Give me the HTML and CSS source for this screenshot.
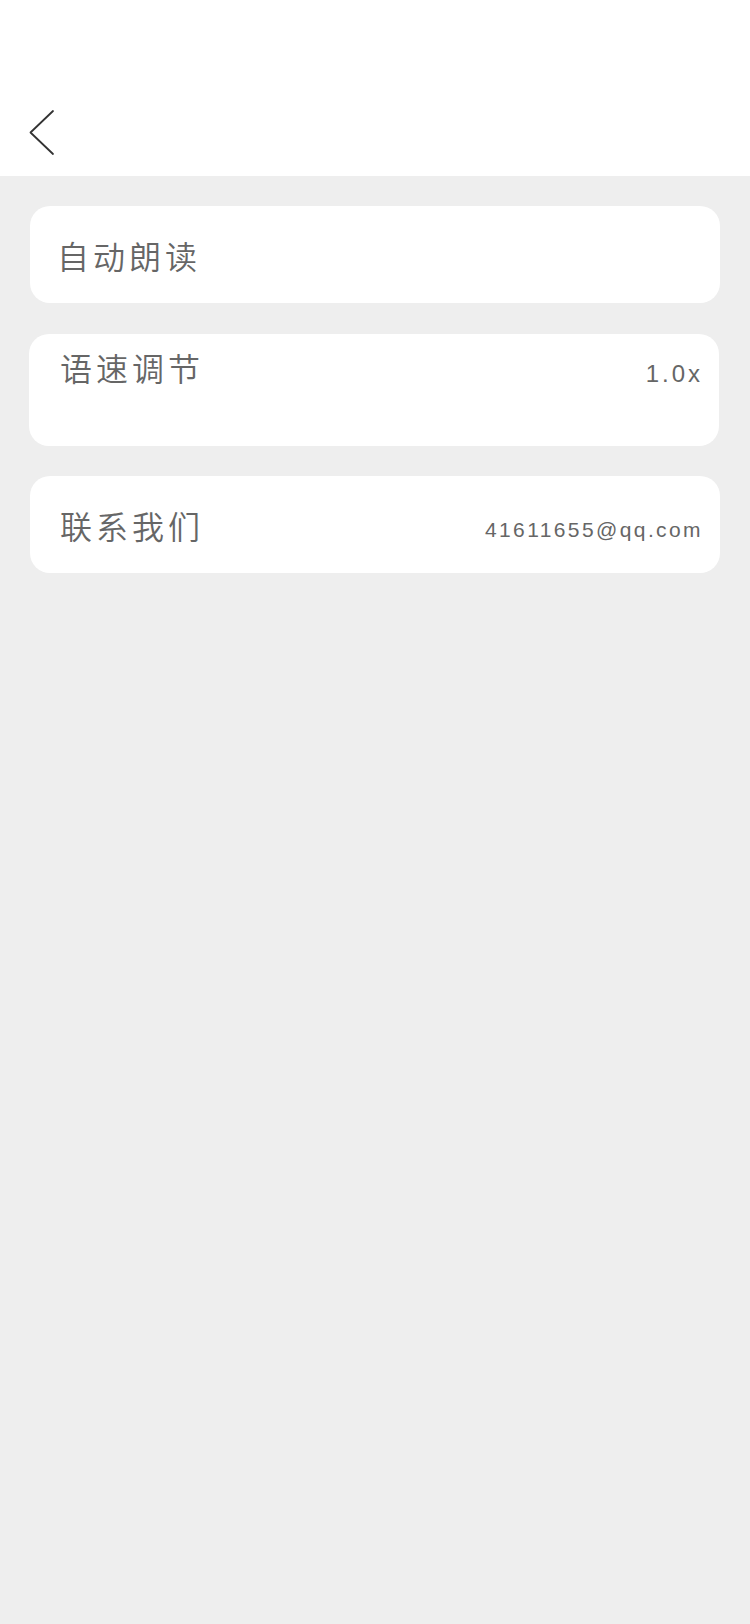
FILE: index.html
```html
<!DOCTYPE html>
<html lang="zh-CN">
<head>
<meta charset="utf-8">
<meta name="viewport" content="width=750">
<title>设置</title>
<link rel="stylesheet" href="styles.css">
</head>
<body>
<header class="header">
  <svg class="back" width="28" height="48" viewBox="0 0 28 48" aria-label="返回">
    <path d="M25 3 L2.5 24.5 L25 46" fill="none" stroke="#333" stroke-width="1.8" stroke-linecap="round" stroke-linejoin="round"/>
  </svg>
</header>
<main class="list">
  <section class="card card-auto">
    <span class="label">自动朗读</span>
  </section>
  <section class="card card-speed">
    <span class="label">语速调节</span>
    <span class="value value-speed">1.0x</span>
  </section>
  <section class="card card-contact">
    <span class="label">联系我们</span>
    <span class="value value-mail">41611655@qq.com</span>
  </section>
</main>
</body>
</html>
```

FILE: styles.css
```css
* { box-sizing: border-box; }
html, body {
  margin: 0;
  padding: 0;
  background: #eeeeee;
}
body {
  width: 750px;
  min-height: 1624px;
  font-family: "Noto Sans CJK SC", "Liberation Sans", sans-serif;
}
.header {
  height: 176px;
  background: #ffffff;
  display: flex;
  align-items: flex-start;
  padding: 108px 0 0 28px;
}
.back { display: block; }
.list {
  display: flex;
  flex-direction: column;
  padding-top: 30px;
}
.card {
  background: #ffffff;
  border-radius: 20px;
  display: flex;
  justify-content: space-between;
  align-items: flex-start;
}
.label {
  font-family: "Noto Sans CJK SC", sans-serif;
  font-weight: 350;
  font-size: 32px;
  line-height: 32px;
  letter-spacing: 4px;
  color: #666666;
}
.value {
  font-family: "Liberation Sans", Arial, sans-serif;
  line-height: 1;
  color: #666666;
}
.card-auto {
  margin: 0 30px 0 30px;
  height: 97px;
  padding: 33px 29px 0 27px;
}
.card-speed {
  margin: 31px 31px 0 29px;
  height: 112px;
  padding: 17px 16px 0 31px;
}
.value-speed {
  font-size: 24px;
  letter-spacing: 3px;
  margin-top: 11px;
}
.card-contact {
  margin: 30px 30px 0 30px;
  height: 97px;
  padding: 33px 17px 0 30px;
}
.value-mail {
  font-size: 21px;
  letter-spacing: 2.4px;
  margin-top: 10px;
}
```
